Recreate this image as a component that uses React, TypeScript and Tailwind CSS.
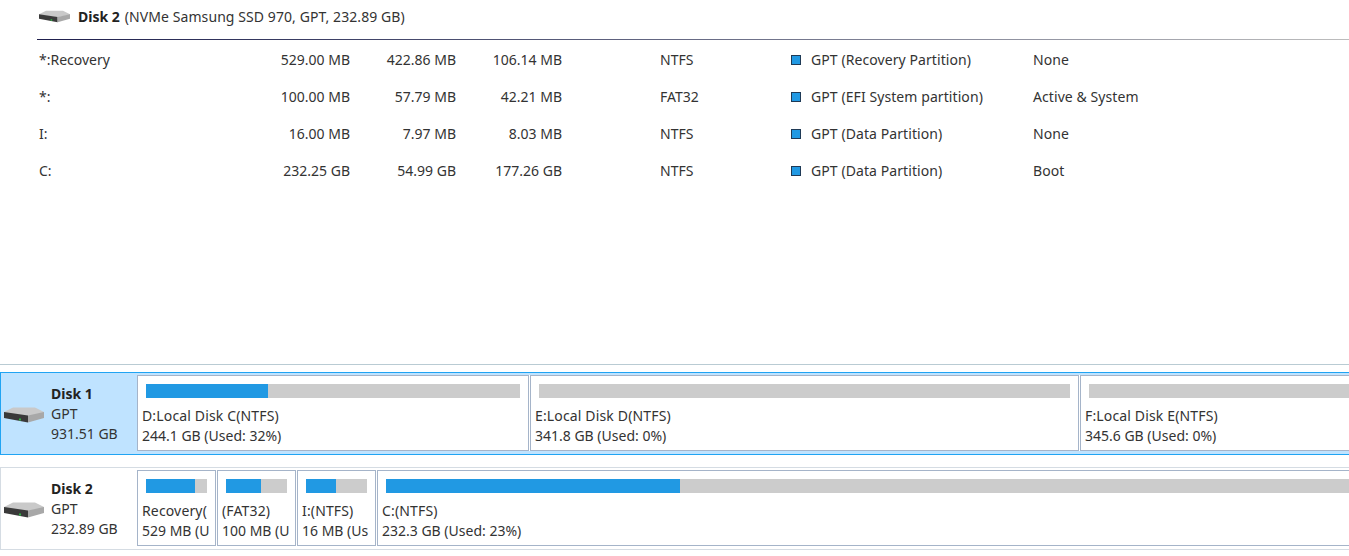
const font = "font-['Noto_Sans','Open_Sans',sans-serif]";

function DiskIcon({ className }: { className?: string }) {
  return (
    <svg viewBox="0 0 40 16" className={className}>
      <polygon points="0,5 9,0.5 31,0.5 40,5 40,6 24,9 0,6" fill="#c9c9c9" />
      <polygon points="0,5 24,8.5 24,15.5 0,11" fill="#3a3a3a" />
      <polygon points="24,8.5 40,5 40,11 24,15.5" fill="#a8a8a8" />
      <rect x="15" y="11.5" width="2" height="2" fill="#2fb344" />
    </svg>
  );
}

const rows = [
  ["*:Recovery", "529.00 MB", "422.86 MB", "106.14 MB", "NTFS", "GPT (Recovery Partition)", "None"],
  ["*:", "100.00 MB", "57.79 MB", "42.21 MB", "FAT32", "GPT (EFI System partition)", "Active & System"],
  ["I:", "16.00 MB", "7.97 MB", "8.03 MB", "NTFS", "GPT (Data Partition)", "None"],
  ["C:", "232.25 GB", "54.99 GB", "177.26 GB", "NTFS", "GPT (Data Partition)", "Boot"],
];

function Partition({ width, barWidth, used, name, size }: { width: string; barWidth: string; used: number; name: string; size: string }) {
  return (
    <div className={`${width} shrink-0 h-full border border-[#a5b4c9] bg-white pt-2 pl-[8px] pr-[6px] overflow-hidden`}>
      <div className={`${barWidth} h-[14px] bg-[#cccccc]`}>
        <div className="h-full bg-[#2199e3]" style={{ width: `${used}%` }} />
      </div>
      <div className="mt-[8px] -ml-1 whitespace-nowrap overflow-hidden text-[14px] leading-[20px] text-[#333333]">
        <div className="tracking-[0.15px]">{name}</div>
        <div>{size}</div>
      </div>
    </div>
  );
}

function DiskInfo({ size }: { size: string }) {
  return (
    <div className="flex w-[136px] h-[76px] shrink-0 items-center pl-[3px]">
      <DiskIcon className="w-[40px] h-[16px] shrink-0 mt-[4px]" />
      <div className="ml-[7px] mt-[2px] text-[14px] leading-[20px] text-[#333333]">
        <div className="font-bold text-[#222222]">Disk {size === "931.51 GB" ? 1 : 2}</div>
        <div>GPT</div>
        <div>{size}</div>
      </div>
    </div>
  );
}

export default function App() {
  return (
    <div className={`${font} w-[1349px] h-[556px] bg-white overflow-hidden flex flex-col text-[14px] text-[#333333]`}>
      {/* Disk details */}
      <div className="h-[364px] shrink-0 pl-[37px]">
        <div className="flex items-center h-[39px] pb-[6px]">
          <DiskIcon className="w-[31px] h-[13px] ml-[2px] shrink-0" />
          <span className="ml-[8px] font-bold text-[#222222]">Disk 2</span>
          <span className="ml-[5px] tracking-[0.08px]">(NVMe Samsung SSD 970, GPT, 232.89 GB)</span>
        </div>
        <div className="h-[1px] bg-gradient-to-r from-[#1f1f4d] to-[#bdbdbd]" />
        {rows.map((row, i) => (
          <div key={i} className="flex items-center h-[37px] pt-[2px] whitespace-nowrap">
            <div className="w-[213px] pl-[2px]">{row[0]}</div>
            <div className="w-[100px] text-right">{row[1]}</div>
            <div className="w-[106px] text-right">{row[2]}</div>
            <div className="w-[106px] text-right">{row[3]}</div>
            <div className="w-[230px] pl-[98px]">{row[4]}</div>
            <div className="w-[241px] flex items-center">
              <span className="w-[10px] h-[10px] bg-[#2199e3] border border-[#1f3a56] mr-[10px] ml-[-1px]" />
              <span className="tracking-[0.08px]">{row[5]}</span>
            </div>
            <div className="tracking-[0.08px]">{row[6]}</div>
          </div>
        ))}
      </div>

      {/* Disk map */}
      <div className="h-[8px] shrink-0 border-t border-[#b9cbd3]" />
      <div className="flex h-[83px] shrink-0 items-start pt-[2px] border border-r-0 border-[#20a4f3] bg-[#bfe3ff]">
        <DiskInfo size="931.51 GB" />
        <div className="flex flex-1 h-[76px] gap-[1px] bg-white overflow-hidden">
          <Partition width="w-[392px]" barWidth="w-[374px]" used={32.6} name="D:Local Disk C(NTFS)" size="244.1 GB (Used: 32%)" />
          <Partition width="w-[549px]" barWidth="w-[531px]" used={0} name="E:Local Disk D(NTFS)" size="341.8 GB (Used: 0%)" />
          <Partition width="w-[320px]" barWidth="w-[300px]" used={0} name="F:Local Disk E(NTFS)" size="345.6 GB (Used: 0%)" />
        </div>
      </div>
      <div className="h-[12px] shrink-0" />
      <div className="flex h-[83px] shrink-0 items-start pt-[2px] border border-r-0 border-[#d5dce3] bg-white">
        <DiskInfo size="232.89 GB" />
        <div className="flex flex-1 h-[76px] gap-[1px] overflow-hidden">
          <Partition width="w-[79px]" barWidth="w-[61px]" used={80} name="Recovery(" size="529 MB (U" />
          <Partition width="w-[79px]" barWidth="w-[61px]" used={57} name="(FAT32)" size="100 MB (U" />
          <Partition width="w-[79px]" barWidth="w-[61px]" used={49} name="I:(NTFS)" size="16 MB (Us" />
          <Partition width="w-[1000px]" barWidth="w-[982px]" used={29.9} name="C:(NTFS)" size="232.3 GB (Used: 23%)" />
        </div>
      </div>
    </div>
  );
}
